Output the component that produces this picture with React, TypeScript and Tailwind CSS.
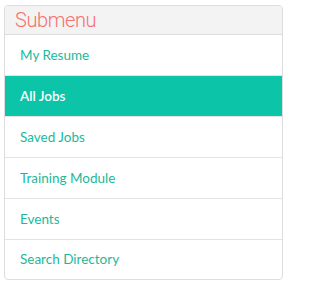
const ITEMS = [
  { label: "My Resume" },
  { label: "All Jobs", active: true },
  { label: "Saved Jobs" },
  { label: "Training Module" },
  { label: "Events" },
  { label: "Search Directory" },
];

export default function App() {
  return (
    <div className="min-h-screen bg-white pt-[5px] pl-[4px]">
      <div className="w-[279px] overflow-hidden rounded-[4px] border border-[#dddddd] bg-white">
        <div className="flex h-[29px] items-center border-b border-[#dddddd] bg-[#f3f3f3] px-[10px]">
          <span className="font-['Roboto',sans-serif] text-[20px] font-light leading-none tracking-[-0.4px] text-[#f7716e]">
            Submenu
          </span>
        </div>
        <ul className="font-['Lato',sans-serif] text-[13.5px]">
          {ITEMS.map(({ label, active }, i) => {
            const last = i === ITEMS.length - 1;
            return (
              <li
                key={label}
                className={`flex items-center px-[15px] ${
                  last ? "h-[39px]" : "h-[41px] border-b border-[#e3e3e3]"
                } ${active ? "bg-[#0cc4a7] font-semibold text-white" : "text-[#1bb99b]"}`}
              >
                {label}
              </li>
            );
          })}
        </ul>
      </div>
    </div>
  );
}
